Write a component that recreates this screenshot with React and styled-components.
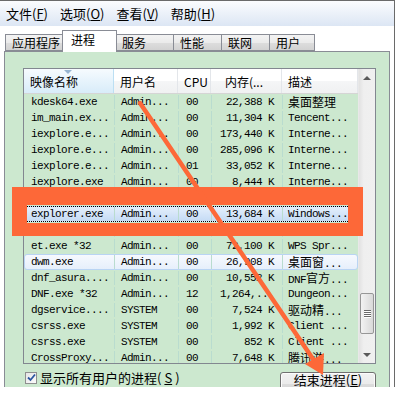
import React from "react";
import styled, { createGlobalStyle } from "styled-components";

const UI = `"Noto Sans CJK SC", "Liberation Sans", sans-serif`;
const MONO = `"Liberation Mono", "Noto Sans CJK SC", monospace`;
const ORANGE = "#fd6838";

const GlobalStyle = createGlobalStyle`
  * { box-sizing: border-box; }
  body { margin: 0; background: #fff; font-family: ${UI}; }
`;

//window frame
const Frame = styled.div`
    position: relative;
    width: 395px;
    height: 387px;
    overflow: hidden;
    background: #fff;
    border-top: 1px solid #6a6a6a;
    border-right: 1px solid #6a6a6a;
    display: flex;
    flex-direction: column;
`;

const MenuBar = styled.div`
    flex-shrink: 0;
    height: 25px;
    display: flex;
    align-items: center;
    gap: 12px;
    padding-left: 6px;
    background: linear-gradient(#fbfcfe, #dce6f4);
    font-size: 13px;
    color: #000;
`;
const MenuItem = styled.span`
    u { text-decoration: underline; }
`;

const TabStrip = styled.div`
    flex-shrink: 0;
    height: 25px;
    display: flex;
    align-items: flex-end;
    padding-left: 5px;
    position: relative;
    z-index: 1;
`;
const Tab = styled.div`
    flex-shrink: 0;
    width: ${p => p.$w}px;
    height: ${p => (p.$active ? 22 : 17)}px;
    margin-bottom: ${p => (p.$active ? -1 : 0)}px;
    margin-left: ${p => (p.$active ? -1 : 0)}px;
    margin-right: ${p => (p.$active ? -1 : 0)}px;
    padding: ${p => (p.$active ? "0 0 0 8px" : "0 0 0 6px")};
    border: 1px solid #898c95;
    border-bottom: ${p => (p.$active ? "none" : "1px solid #898c95")};
    border-left: ${p => (p.$first || p.$active ? "1px solid #898c95" : "none")};
    background: ${p => (p.$active
        ? "#fff"
        : "linear-gradient(#f3f3f3 0%, #ebebeb 50%, #dddddd 51%, #d2d2d2 100%)")};
    font-size: 12px;
    line-height: ${p => (p.$active ? 18 : 15)}px;
    color: #000;
    position: relative;
    z-index: ${p => (p.$active ? 2 : 1)};
`;

const Panel = styled.div`
    flex-shrink: 0;
    height: 345px;
    width: 386px;
    margin-left: 4px;
    border: 1px solid #898c95;
    background: #cce8cf;
    padding: 16px 13px 0 18px;
`;

//list view
const ListView = styled.div`
    height: 296px;
    border: 1px solid #828790;
    display: flex;
    background: #cce8cf;
`;
const ListMain = styled.div`
    width: 334px;
    display: flex;
    flex-direction: column;
    overflow: hidden;
`;
const COLS = "90px 64px 33px 71px 76px";
const HeaderRow = styled.div`
    flex-shrink: 0;
    height: 25px;
    display: grid;
    grid-template-columns: ${COLS};
    border-bottom: 1px solid #d5d5d5;
`;
const HeaderCell = styled.div`
    position: relative;
    font-size: 12px;
    line-height: 25px;
    color: #000;
    white-space: nowrap;
    overflow: hidden;
    padding: ${p => (p.$right ? "0 18px 0 0" : "0 0 0 6px")};
    text-align: ${p => (p.$right ? "right" : "left")};
    border-right: 1px solid ${p => (p.$sorted ? "#bcdff3" : "#e3e6ea")};
    background: ${p => (p.$sorted
        ? "linear-gradient(#f6fbfe 0%, #e8f4fc 45%, #d8ecf9 100%)"
        : "linear-gradient(#ffffff 0%, #ffffff 50%, #f5f6f7 51%, #f0f1f2 100%)")};
`;
const SortArrow = styled.span`
    position: absolute;
    left: 40px;
    top: 1px;
    width: 0;
    height: 0;
    border-left: 4px solid transparent;
    border-right: 4px solid transparent;
    border-top: 4px solid #97b4cf;
`;
const Body = styled.div`
    flex: 1;
    overflow: hidden;
`;
const Row = styled.div`
    height: 16px;
    display: grid;
    grid-template-columns: ${COLS};
    border: 1px solid transparent;
    ${p => p.$state === "selected" && `
        border-top: 1px dotted #000;
        border-bottom: 1px dotted #000;
        background: linear-gradient(#e4effc, #c5dbf5);
    `}
    ${p => p.$state === "hover" && `
        border-color: #b9d4f3;
        border-radius: 3px;
        background: linear-gradient(#f6f9fe, #e6effb);
    `}
`;
const Cell = styled.div`
    font-family: ${MONO};
    font-size: 11px;
    letter-spacing: -0.6px;
    line-height: 14px;
    color: #000;
    white-space: nowrap;
    overflow: hidden;
    padding: ${p => (p.$right ? "0 8px 0 0" : `0 0 0 ${p.$pad || 6}px`)};
    text-align: ${p => (p.$right ? "right" : "left")};
    border-right: 1px solid #b9dccf;
`;
const Cjk = styled.span`
    font-family: ${UI};
    font-size: 12px;
    letter-spacing: 0;
`;

//scroll bar
const ScrollBar = styled.div`
    width: 17px;
    display: flex;
    flex-direction: column;
    background: linear-gradient(90deg, #e2e2e2, #efefef 30%, #f0f0f0);
    border-left: 1px solid #e8e8e8;
`;
const ScrollBtn = styled.div`
    flex-shrink: 0;
    height: 17px;
    display: flex;
    align-items: center;
    justify-content: center;
    &::after {
        content: "";
        border-left: 4px solid transparent;
        border-right: 4px solid transparent;
        ${p => (p.$down ? "border-top: 4px solid #5a5a5a;" : "border-bottom: 4px solid #5a5a5a;")}
    }
`;
const Track = styled.div`
    flex: 1;
    padding: 207px 1px 0 1px;
`;
const Thumb = styled.div`
    height: 41px;
    border: 1px solid #979797;
    border-radius: 2px;
    background: linear-gradient(90deg, #f3f3f3, #e6e6e6 50%, #d9d9d9);
    display: flex;
    flex-direction: column;
    align-items: center;
    justify-content: center;
    gap: 1px;
    span {
        width: 7px;
        height: 1px;
        background: #6a6a6a;
        box-shadow: 0 1px 0 #fff;
    }
`;

//footer
const Footer = styled.div`
    display: flex;
    justify-content: space-between;
    align-items: flex-start;
    padding: 7px 0 0 2px;
`;
const CheckLabel = styled.label`
    display: flex;
    align-items: center;
    gap: 3px;
    height: 13px;
    font-size: 13px;
    line-height: 13px;
    color: #000;
`;
const CheckBox = styled.span`
    width: 12px;
    height: 12px;
    border: 1px solid #8e8f8f;
    background: linear-gradient(135deg, #e6e6e6, #fbfbfb);
    display: flex;
    align-items: center;
    justify-content: center;
`;
const Button = styled.button`
    width: 96px;
    height: 23px;
    margin-top: 1px;
    border: 1px solid #707070;
    border-radius: 3px;
    background: linear-gradient(#f2f2f2 0%, #ebebeb 50%, #dddddd 51%, #cfcfcf 100%);
    box-shadow: inset 0 0 0 1px #fcfcfc;
    font-family: ${UI};
    font-size: 13px;
    line-height: 13px;
    color: #000;
    padding: 0 0 9px 0;
`;

//annotations drawn over the screenshot
const HighlightBox = styled.div`
    position: absolute;
    left: 12px;
    top: 186px;
    width: 351px;
    height: 49px;
    border-style: solid;
    border-color: ${ORANGE};
    border-width: 18px 15px 13px 15px;
    pointer-events: none;
`;
const ArrowLayer = styled.svg`
    position: absolute;
    left: 0;
    top: -1px;
    pointer-events: none;
`;

const rows = [
    {name: "kdesk64.exe", user: "Admin...", cpu: "00", mem: "22,388 K", desc: "桌面整理"},
    {name: "im_main.ex...", user: "Admin...", cpu: "00", mem: "11,304 K", desc: "Tencent..."},
    {name: "iexplore.e...", user: "Admin...", cpu: "00", mem: "173,440 K", desc: "Interne..."},
    {name: "iexplore.e...", user: "Admin...", cpu: "00", mem: "285,096 K", desc: "Interne..."},
    {name: "iexplore.e...", user: "Admin...", cpu: "01", mem: "33,052 K", desc: "Interne..."},
    {name: "iexplore.exe", user: "Admin...", cpu: "00", mem: "8,444 K", desc: "Interne..."},
    {name: "QQ.exe *32", user: "Admin...", cpu: "00", mem: "85,216 K", desc: "腾讯QQ"},
    {name: "explorer.exe", user: "Admin...", cpu: "00", mem: "13,684 K", desc: "Windows...", state: "selected"},
    {name: "svchost.exe", user: "SYSTEM", cpu: "00", mem: "5,120 K", desc: "Windows..."},
    {name: "et.exe *32", user: "Admin...", cpu: "00", mem: "72,100 K", desc: "WPS Spr..."},
    {name: "dwm.exe", user: "Admin...", cpu: "00", mem: "26,908 K", desc: "桌面窗...", state: "hover"},
    {name: "dnf_asura....", user: "Admin...", cpu: "00", mem: "10,552 K", desc: "DNF官方..."},
    {name: "DNF.exe *32", user: "Admin...", cpu: "12", mem: "1,264,...", desc: "Dungeon..."},
    {name: "dgservice....", user: "SYSTEM", cpu: "00", mem: "7,524 K", desc: "驱动精..."},
    {name: "csrss.exe", user: "SYSTEM", cpu: "00", mem: "1,992 K", desc: "Client ..."},
    {name: "csrss.exe", user: "SYSTEM", cpu: "00", mem: "852 K", desc: "Client ..."},
    {name: "CrossProxy...", user: "Admin...", cpu: "00", mem: "7,648 K", desc: "腾讯游..."},
];

const tabs = [
    {label: "应用程序", w: 58},
    {label: "进程", w: 55, active: true},
    {label: "服务", w: 58},
    {label: "性能", w: 48},
    {label: "联网", w: 48},
    {label: "用户", w: 45},
];

// wrap chinese runs so they use the cjk font at full width
function mixed(text) {
    return text.split(/([\u4e00-\u9fff]+)/).map((part, i) =>
        /[\u4e00-\u9fff]/.test(part) ? <Cjk key={i}>{part}</Cjk> : part
    );
}

export default function App() {
    return (
        <Frame>
            <GlobalStyle/>
            <MenuBar>
                <MenuItem>文件(<u>F</u>)</MenuItem>
                <MenuItem>选项(<u>O</u>)</MenuItem>
                <MenuItem>查看(<u>V</u>)</MenuItem>
                <MenuItem>帮助(<u>H</u>)</MenuItem>
            </MenuBar>
            <TabStrip>
                {tabs.map((t, i) => (
                    <Tab key={t.label} $w={t.w} $active={t.active} $first={i === 0}>{t.label}</Tab>
                ))}
            </TabStrip>
            <Panel>
                <ListView>
                    <ListMain>
                        <HeaderRow>
                            <HeaderCell $sorted>映像名称<SortArrow/></HeaderCell>
                            <HeaderCell>用户名</HeaderCell>
                            <HeaderCell>CPU</HeaderCell>
                            <HeaderCell $right>内存(...</HeaderCell>
                            <HeaderCell>描述</HeaderCell>
                        </HeaderRow>
                        <Body>
                            {rows.map((r, i) => (
                                <Row key={i} $state={r.state}>
                                    <Cell>{r.name}</Cell>
                                    <Cell>{r.user}</Cell>
                                    <Cell $pad={7}>{r.cpu}</Cell>
                                    <Cell $right>{r.mem}</Cell>
                                    <Cell $pad={5}>{mixed(r.desc)}</Cell>
                                </Row>
                            ))}
                        </Body>
                    </ListMain>
                    <ScrollBar>
                        <ScrollBtn/>
                        <Track>
                            <Thumb><span/><span/><span/><span/></Thumb>
                        </Track>
                        <ScrollBtn $down/>
                    </ScrollBar>
                </ListView>
                <Footer>
                    <CheckLabel>
                        <CheckBox>
                            <svg width="9" height="9" viewBox="0 0 9 9">
                                <path d="M1 4.5 L3.5 7 L8 1.5" fill="none" stroke="#2b56a0" strokeWidth="1.8"/>
                            </svg>
                        </CheckBox>
                        显示所有用户的进程(<u>S</u>)
                    </CheckLabel>
                    <Button>结束进程(<u>E</u>)</Button>
                </Footer>
            </Panel>
            <HighlightBox/>
            <ArrowLayer width="399" height="398" viewBox="0 0 399 398">
                <line x1="140" y1="103" x2="315" y2="362" stroke={ORANGE} strokeWidth="4.5" strokeLinecap="round"/>
                <polygon points="323,375 305,364 324,353" fill={ORANGE}/>
            </ArrowLayer>
        </Frame>
    );
}
